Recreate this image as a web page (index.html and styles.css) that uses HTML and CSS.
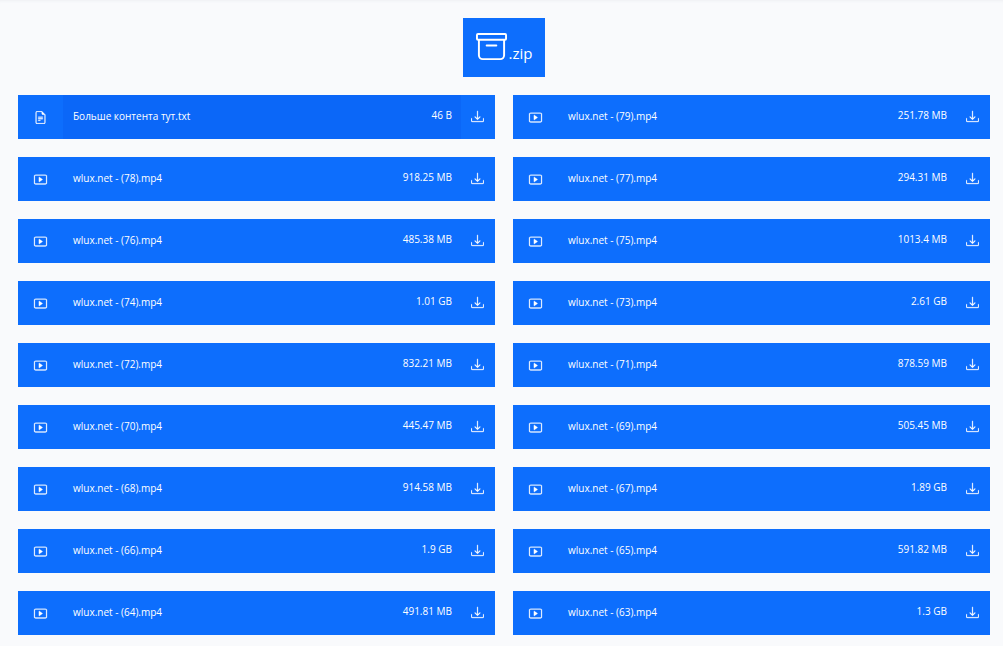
FILE: index.html
```html
<!DOCTYPE html>
<html lang="ru">
<head>
  <meta charset="UTF-8">
  <meta name="viewport" content="width=device-width, initial-scale=1.0">
  <title>wlux.net</title>
  <link rel="stylesheet" href="styles.css">
</head>
<body>
  <!-- Icons -->
  <svg class="sprite" aria-hidden="true">
    <symbol id="archive" viewBox="0 0 16 16">
      <path d="M0 2a1 1 0 0 1 1-1h14a1 1 0 0 1 1 1v2a1 1 0 0 1-1 1v7.500a2.500 2.500 0 0 1-2.500 2.500h-9A2.500 2.500 0 0 1 1 12.500V5a1 1 0 0 1-1-1V2zm2 3v7.500A1.500 1.500 0 0 0 3.500 14h9a1.500 1.500 0 0 0 1.500-1.500V5H2zm13-3H1v2h14V2zM5 7.500a.5.5 0 0 1 .5-.5h5a.5.5 0 0 1 0 1h-5a.5.5 0 0 1-.5-.5z"/>
    </symbol>
    <symbol id="text" viewBox="0 0 16 16">
      <path d="M5.500 7a.5.5 0 0 0 0 1h5a.5.5 0 0 0 0-1h-5zM5 9.500a.5.5 0 0 1 .5-.5h5a.5.5 0 0 1 0 1h-5a.5.5 0 0 1-.5-.5zm0 2a.5.5 0 0 1 .5-.5h2a.5.5 0 0 1 0 1h-2a.5.5 0 0 1-.5-.5z"/>
      <path d="M9.500 0H4a2 2 0 0 0-2 2v12a2 2 0 0 0 2 2h8a2 2 0 0 0 2-2V4.500L9.500 0zm0 1v2A1.500 1.500 0 0 0 11 4.500h2V14a1 1 0 0 1-1 1H4a1 1 0 0 1-1-1V2a1 1 0 0 1 1-1h5.500z"/>
    </symbol>
    <symbol id="video" viewBox="0 0 16 16">
      <path d="M6.790 5.093A.5.5 0 0 0 6 5.500v5a.5.5 0 0 0 .79.407l3.500-2.500a.5.5 0 0 0 0-.814l-3.500-2.500z"/>
      <path d="M0 4a2 2 0 0 1 2-2h12a2 2 0 0 1 2 2v8a2 2 0 0 1-2 2H2a2 2 0 0 1-2-2V4zm15 0a1 1 0 0 0-1-1H2a1 1 0 0 0-1 1v8a1 1 0 0 0 1 1h12a1 1 0 0 0 1-1V4z"/>
    </symbol>
    <symbol id="download" viewBox="0 0 16 16">
      <path d="M.5 9.900a.5.5 0 0 1 .5.5v2.500a1 1 0 0 0 1 1h12a1 1 0 0 0 1-1v-2.500a.5.5 0 0 1 1 0v2.500a2 2 0 0 1-2 2H2a2 2 0 0 1-2-2v-2.500a.5.5 0 0 1 .5-.5z"/>
      <path d="M7.646 11.854a.5.5 0 0 0 .708 0l3-3a.5.5 0 0 0-.708-.708L8.500 10.293V1.500a.5.5 0 0 0-1 0v8.793L5.354 8.146a.5.5 0 1 0-.708.708l3 3z"/>
    </symbol>
  </svg>

  <main class="page">
    <button type="button" class="zip"><svg class="zip-icon" aria-hidden="true"><use href="#archive"/></svg><span>.zip</span></button>

    <div class="files">
      <div class="file">
        <svg class="icon"><use href="#text"/></svg>
        <a class="info active" href="#"><span class="name">Больше контента тут.txt</span><span class="size">46 B</span></a>
        <button type="button" class="save" aria-label="Скачать"><svg><use href="#download"/></svg></button>
      </div>
      <div class="file">
        <svg class="icon"><use href="#video"/></svg>
        <a class="info" href="#"><span class="name">wlux.net - (79).mp4</span><span class="size">251.78 MB</span></a>
        <button type="button" class="save" aria-label="Скачать"><svg><use href="#download"/></svg></button>
      </div>
      <div class="file">
        <svg class="icon"><use href="#video"/></svg>
        <a class="info" href="#"><span class="name">wlux.net - (78).mp4</span><span class="size">918.25 MB</span></a>
        <button type="button" class="save" aria-label="Скачать"><svg><use href="#download"/></svg></button>
      </div>
      <div class="file">
        <svg class="icon"><use href="#video"/></svg>
        <a class="info" href="#"><span class="name">wlux.net - (77).mp4</span><span class="size">294.31 MB</span></a>
        <button type="button" class="save" aria-label="Скачать"><svg><use href="#download"/></svg></button>
      </div>
      <div class="file">
        <svg class="icon"><use href="#video"/></svg>
        <a class="info" href="#"><span class="name">wlux.net - (76).mp4</span><span class="size">485.38 MB</span></a>
        <button type="button" class="save" aria-label="Скачать"><svg><use href="#download"/></svg></button>
      </div>
      <div class="file">
        <svg class="icon"><use href="#video"/></svg>
        <a class="info" href="#"><span class="name">wlux.net - (75).mp4</span><span class="size">1013.4 MB</span></a>
        <button type="button" class="save" aria-label="Скачать"><svg><use href="#download"/></svg></button>
      </div>
      <div class="file">
        <svg class="icon"><use href="#video"/></svg>
        <a class="info" href="#"><span class="name">wlux.net - (74).mp4</span><span class="size">1.01 GB</span></a>
        <button type="button" class="save" aria-label="Скачать"><svg><use href="#download"/></svg></button>
      </div>
      <div class="file">
        <svg class="icon"><use href="#video"/></svg>
        <a class="info" href="#"><span class="name">wlux.net - (73).mp4</span><span class="size">2.61 GB</span></a>
        <button type="button" class="save" aria-label="Скачать"><svg><use href="#download"/></svg></button>
      </div>
      <div class="file">
        <svg class="icon"><use href="#video"/></svg>
        <a class="info" href="#"><span class="name">wlux.net - (72).mp4</span><span class="size">832.21 MB</span></a>
        <button type="button" class="save" aria-label="Скачать"><svg><use href="#download"/></svg></button>
      </div>
      <div class="file">
        <svg class="icon"><use href="#video"/></svg>
        <a class="info" href="#"><span class="name">wlux.net - (71).mp4</span><span class="size">878.59 MB</span></a>
        <button type="button" class="save" aria-label="Скачать"><svg><use href="#download"/></svg></button>
      </div>
      <div class="file">
        <svg class="icon"><use href="#video"/></svg>
        <a class="info" href="#"><span class="name">wlux.net - (70).mp4</span><span class="size">445.47 MB</span></a>
        <button type="button" class="save" aria-label="Скачать"><svg><use href="#download"/></svg></button>
      </div>
      <div class="file">
        <svg class="icon"><use href="#video"/></svg>
        <a class="info" href="#"><span class="name">wlux.net - (69).mp4</span><span class="size">505.45 MB</span></a>
        <button type="button" class="save" aria-label="Скачать"><svg><use href="#download"/></svg></button>
      </div>
      <div class="file">
        <svg class="icon"><use href="#video"/></svg>
        <a class="info" href="#"><span class="name">wlux.net - (68).mp4</span><span class="size">914.58 MB</span></a>
        <button type="button" class="save" aria-label="Скачать"><svg><use href="#download"/></svg></button>
      </div>
      <div class="file">
        <svg class="icon"><use href="#video"/></svg>
        <a class="info" href="#"><span class="name">wlux.net - (67).mp4</span><span class="size">1.89 GB</span></a>
        <button type="button" class="save" aria-label="Скачать"><svg><use href="#download"/></svg></button>
      </div>
      <div class="file">
        <svg class="icon"><use href="#video"/></svg>
        <a class="info" href="#"><span class="name">wlux.net - (66).mp4</span><span class="size">1.9 GB</span></a>
        <button type="button" class="save" aria-label="Скачать"><svg><use href="#download"/></svg></button>
      </div>
      <div class="file">
        <svg class="icon"><use href="#video"/></svg>
        <a class="info" href="#"><span class="name">wlux.net - (65).mp4</span><span class="size">591.82 MB</span></a>
        <button type="button" class="save" aria-label="Скачать"><svg><use href="#download"/></svg></button>
      </div>
      <div class="file">
        <svg class="icon"><use href="#video"/></svg>
        <a class="info" href="#"><span class="name">wlux.net - (64).mp4</span><span class="size">491.81 MB</span></a>
        <button type="button" class="save" aria-label="Скачать"><svg><use href="#download"/></svg></button>
      </div>
      <div class="file">
        <svg class="icon"><use href="#video"/></svg>
        <a class="info" href="#"><span class="name">wlux.net - (63).mp4</span><span class="size">1.3 GB</span></a>
        <button type="button" class="save" aria-label="Скачать"><svg><use href="#download"/></svg></button>
      </div>
    </div>
  </main>
</body>
</html>
```
FILE: styles.css
```css
* {
  box-sizing: border-box;
}

body {
  margin: 0;
  background-color: #f9fafc;
  font-family: "Segoe UI", "Open Sans", "Noto Sans", sans-serif;
  font-size: 10px;
  color: white;
}

svg {
  fill: currentColor;
}

.sprite {
  display: none;
}

.page {
  display: flex;
  flex-direction: column;
  gap: 18px;
  padding: 18px 13px 11px 18px;
  box-shadow: inset 0 3px 3px -2px #eef0f3;
}

.zip {
  display: flex;
  align-items: flex-end;
  align-self: center;
  gap: 2px;
  height: 59px;
  padding: 0 13px 15px;
  border: 0;
  background-color: #0d6efd;
  color: white;
  font-family: inherit;
  font-size: 15px;
  line-height: 18px;
}

.zip-icon {
  width: 31px;
  height: 31px;
}

.files {
  display: grid;
  grid-template-columns: 1fr 1fr;
  gap: 18px;
}

.file {
  display: flex;
  align-items: center;
  height: 44px;
  background-color: #0d6efd;
}

.icon {
  width: 45px;
  height: 13px;
}

.icon,
.save svg {
  stroke: currentColor;
  stroke-width: 0.3;
}

.info {
  flex: 1;
  display: flex;
  align-items: center;
  justify-content: space-between;
  height: 100%;
  padding: 0 9px 2px 10px;
  color: white;
  text-decoration: none;
}

.info:hover,
.info.active {
  background-color: #0b67f8;
}

.size {
  padding-bottom: 2px;
}

.save {
  display: flex;
  align-items: center;
  justify-content: center;
  width: 34px;
  height: 100%;
  padding: 0 1px 1px 0;
  border: 0;
  background: none;
  color: white;
  cursor: pointer;
}

.save svg {
  width: 13px;
  height: 13px;
}
```
